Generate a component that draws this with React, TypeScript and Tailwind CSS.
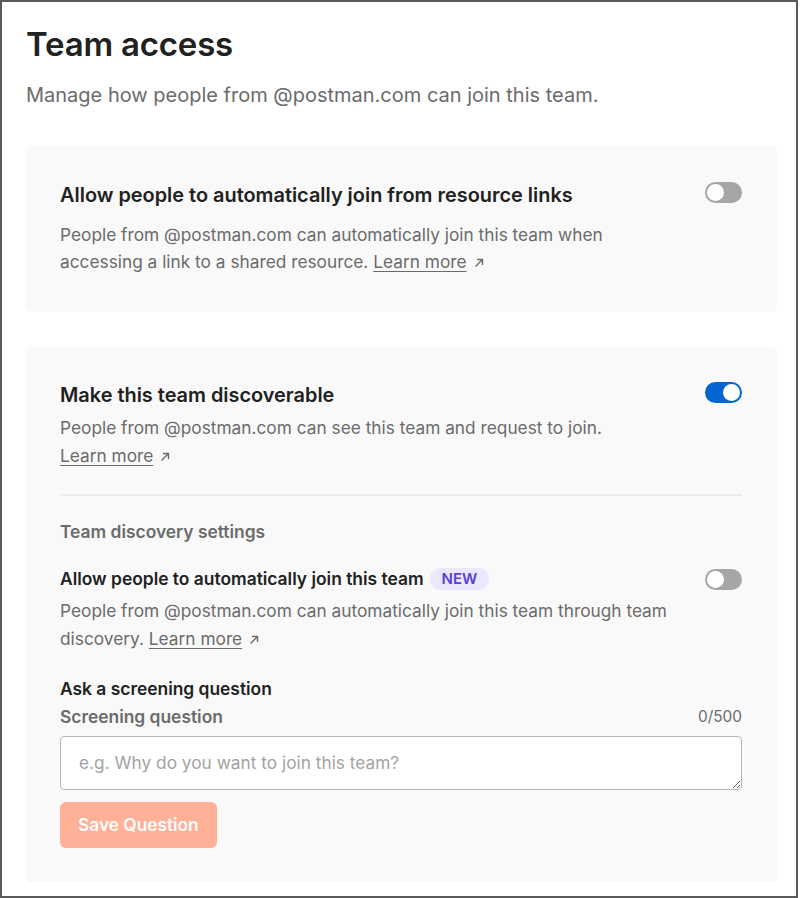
import { useState } from "react"

function Toggle({ on }: { on: boolean }) {
  return (
    <div
      className={`relative h-[21px] w-[37px] shrink-0 rounded-full ${on ? "bg-[#0265d2]" : "bg-[#a6a6a6]"}`}
    >
      <div
        className={`absolute top-[2px] h-[17px] w-[17px] rounded-full bg-white ${on ? "left-[18px]" : "left-[2px]"}`}
      />
    </div>
  )
}

function LearnMore() {
  return (
    <>
      <a className="underline decoration-1 underline-offset-[3px] text-[#6b6b6b]">Learn more</a>
      <svg className="ml-[7px] inline-block align-[0px]" width="10" height="10" viewBox="0 0 10 10" fill="none" stroke="#6b6b6b" strokeWidth="1.4">
        <path d="M1.5 8.5 L8.5 1.5 M3 1.5 H8.5 V7" />
      </svg>
    </>
  )
}

export default function App() {
  const [question, setQuestion] = useState("")

  return (
    <div
      className="h-[898px] w-[798px] border-2 border-[#5a5a5a] bg-white pl-[23px] text-[#212121]"
      style={{ fontFamily: "Inter, 'Noto Sans', sans-serif" }}
    >
      <h1 className="mt-[22px] pl-[1px] text-[33px] leading-[40px] font-semibold tracking-[-0.2px]">Team access</h1>
      <p className="mt-[17px] pl-[1px] text-[20px] leading-[28px] text-[#6b6b6b]">
        Manage how people from @postman.com can join this team.
      </p>

      <div className="mt-[37px] w-[752px] rounded-[6px] bg-[#f9f9f9] px-[35px] pt-[35px] pb-[37px]">
        <div className="flex items-start justify-between">
          <h2 className="text-[19.9px] leading-[28px] font-semibold">
            Allow people to automatically join from resource links
          </h2>
          <div className="pt-[1px]">
            <Toggle on={false} />
          </div>
        </div>
        <p className="mt-[12px] w-[580px] text-[17.3px] leading-[27px] text-[#6b6b6b]">
          People from @postman.com can automatically join this team when accessing a link to a shared resource.{" "}
          <LearnMore />
        </p>
      </div>

      <div className="mt-[35px] w-[752px] rounded-[6px] bg-[#f9f9f9] px-[35px] pt-[34px] pb-[34px]">
        <div className="flex items-start justify-between">
          <h2 className="text-[19.9px] leading-[28px] font-semibold">Make this team discoverable</h2>
          <div className="pt-[1px]">
            <Toggle on={true} />
          </div>
        </div>
        <p className="mt-[5px] text-[17.3px] leading-[28px] text-[#6b6b6b]">
          People from @postman.com can see this team and request to join.
          <br />
          <LearnMore />
        </p>

        <div className="mt-[24px] h-[2px] w-full bg-[#ececec]" />

        <h3 className="mt-[24px] text-[17.4px] leading-[24px] font-semibold text-[#6b6b6b]">Team discovery settings</h3>

        <div className="mt-[23px] flex items-center justify-between">
          <div className="flex items-center gap-[6px]">
            <span className="text-[17.4px] leading-[24px] font-semibold">Allow people to automatically join this team</span>
            <span className="rounded-full bg-[#ebe8fd] px-[12px] text-[15px] leading-[22px] font-semibold text-[#5b3fd6]">
              NEW
            </span>
          </div>
          <Toggle on={false} />
        </div>
        <p className="mt-[6px] w-[640px] text-[17.3px] leading-[28px] text-[#6b6b6b]">
          People from @postman.com can automatically join this team through team discovery.{" "}
          <LearnMore />
        </p>

        <h3 className="mt-[24px] text-[17.4px] leading-[24px] font-semibold">Ask a screening question</h3>
        <div className="mt-[4px] flex items-center justify-between">
          <span className="text-[17.4px] leading-[24px] font-semibold text-[#6b6b6b]">Screening question</span>
          <span className="text-[15.4px] leading-[24px] text-[#6b6b6b]">{question.length}/500</span>
        </div>
        <textarea
          value={question}
          onChange={(e) => setQuestion(e.target.value)}
          placeholder="e.g. Why do you want to join this team?"
          className="mt-[7px] block h-[54px] w-full rounded-[4px] border border-[#b8b8b8] bg-white px-[18px] py-[13px] text-[17.3px] leading-[26px] text-[#212121] outline-none placeholder:text-[#a3a3a3]"
        />
        <button className="mt-[12px] h-[46px] rounded-[6px] bg-[#ffb096] px-[18px] text-[17.3px] font-semibold text-white">
          Save Question
        </button>
      </div>
    </div>
  )
}
